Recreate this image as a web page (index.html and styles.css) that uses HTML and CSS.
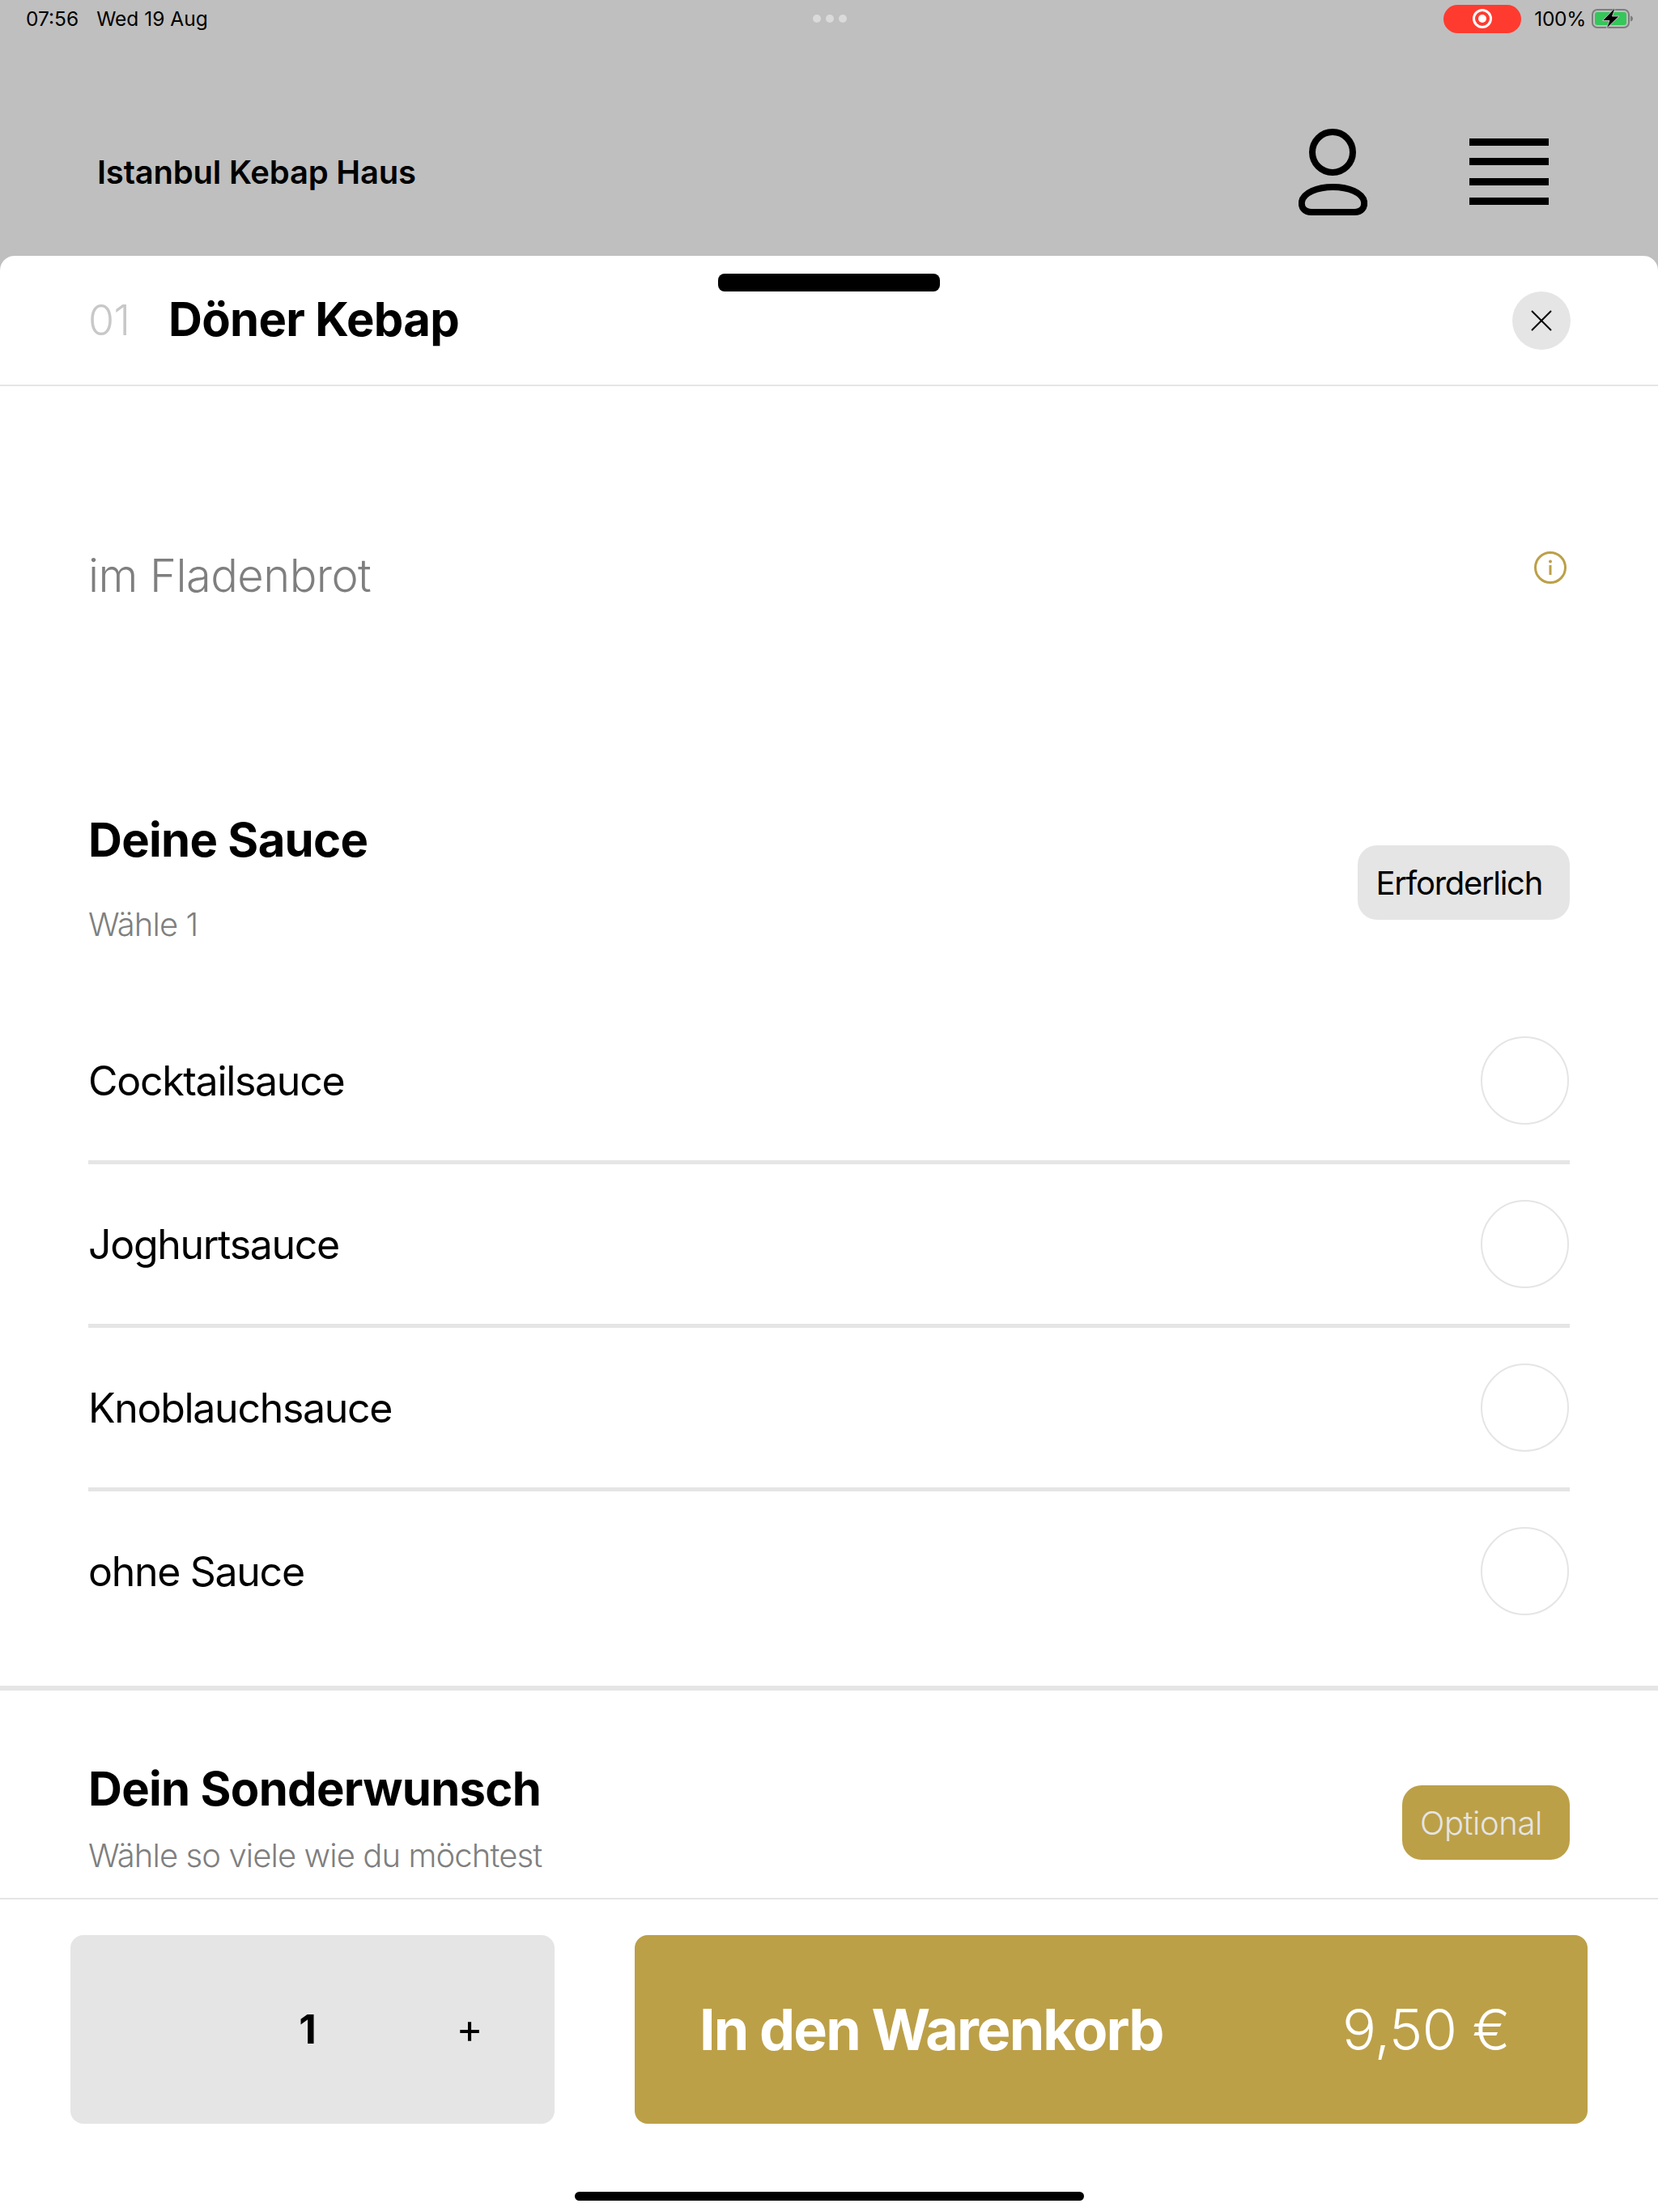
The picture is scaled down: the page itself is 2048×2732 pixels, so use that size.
FILE: index.html
```html
<!DOCTYPE html>
<html lang="de">
<head>
    <meta charset="UTF-8">
    <meta name="viewport" content="width=device-width, initial-scale=1.0">
    <title>Istanbul Kebap Haus</title>
    <link rel="stylesheet" href="styles.css">
</head>
<body>
    <div class="status-bar">
        <div class="status-left"><span>07:56</span><span>Wed 19 Aug</span></div>
        <div class="status-dots"><i></i><i></i><i></i></div>
        <div class="status-right">
            <div class="record-pill">
                <svg width="26" height="26" viewBox="0 0 26 26">
                    <circle cx="13" cy="13" r="10.5" fill="none" stroke="#fff" stroke-width="3"/>
                    <circle cx="13" cy="13" r="5" fill="#fff"/>
                </svg>
            </div>
            <span class="battery-text">100%</span>
            <svg class="battery" width="52" height="26" viewBox="0 0 52 26">
                <rect x="1" y="2" width="45" height="22" rx="6" fill="none" stroke="#7d7d7d" stroke-width="2"/>
                <rect x="4" y="5" width="39" height="16" rx="3" fill="#34c759"/>
                <path d="M48 9.500c2 .4 3 1.800 3 3.500s-1 3.100-3 3.500z" fill="#7d7d7d"/>
                <path d="M28 .5 13.500 15.500H22L18 25.500 34 10H25.500L29 .5z" fill="#000" stroke="#bfbfbf" stroke-width="1"/>
            </svg>
        </div>
    </div>

    <header class="top-bar">
        <div class="brand">Istanbul Kebap Haus</div>
        <div class="top-icons">
            <svg class="user-icon" width="85" height="107" viewBox="0 0 85 107">
                <circle cx="42" cy="29" r="25" fill="none" stroke="#000" stroke-width="8"/>
                <path d="M16 103H69C78 103 82 97 81 90C79 79 62 72 42.500 72C23 72 6 79 4 90C3 97 7 103 16 103Z" fill="none" stroke="#000" stroke-width="8"/>
            </svg>
            <div class="menu-icon"><span></span><span></span><span></span><span></span></div>
        </div>
    </header>

    <div class="sheet">
        <div class="handle"></div>

        <div class="sheet-head">
            <span class="item-no">01</span>
            <h1 class="item-name">Döner Kebap</h1>
            <button class="close-btn">
                <svg width="26" height="26" viewBox="0 0 26 26">
                    <path d="M1 1 25 25M25 1 1 25" stroke="#000" stroke-width="2" fill="none"/>
                </svg>
            </button>
        </div>

        <div class="sheet-body">
            <div class="intro">
                <span class="intro-text">im Fladenbrot</span>
                <svg width="40" height="40" viewBox="0 0 40 40">
                    <circle cx="20" cy="20" r="18.500" fill="none" stroke="#bca048" stroke-width="3"/>
                    <circle cx="20" cy="12.500" r="2" fill="#bca048"/>
                    <rect x="18.500" y="17" width="3" height="12" fill="#bca048"/>
                </svg>
            </div>

            <section class="group group-sauce">
                <div class="group-head">
                    <div>
                        <h2 class="group-title">Deine Sauce</h2>
                        <p class="group-sub">Wähle 1</p>
                    </div>
                    <span class="badge badge-required">Erforderlich</span>
                </div>
                <div class="option"><span>Cocktailsauce</span><span class="radio"></span></div>
                <div class="option"><span>Joghurtsauce</span><span class="radio"></span></div>
                <div class="option"><span>Knoblauchsauce</span><span class="radio"></span></div>
                <div class="option"><span>ohne Sauce</span><span class="radio"></span></div>
            </section>

            <section class="group group-extra">
                <div class="group-head">
                    <div>
                        <h2 class="group-title">Dein Sonderwunsch</h2>
                        <p class="group-sub">Wähle so viele wie du möchtest</p>
                    </div>
                    <span class="badge badge-optional">Optional</span>
                </div>
            </section>
        </div>

        <footer class="sheet-foot">
            <div class="foot-actions">
                <div class="qty">
                    <span class="qty-value">1</span>
                    <span class="qty-plus">+</span>
                </div>
                <button class="cart-btn">
                    <span class="cart-label">In den Warenkorb</span>
                    <span class="cart-price">9,50 €</span>
                </button>
            </div>
            <div class="home-bar"></div>
        </footer>
    </div>
</body>
</html>
```
FILE: styles.css
```css
* {
    box-sizing: border-box;
}

html, body {
    margin: 0;
    padding: 0;
}

body {
    width: 2048px;
    height: 2732px;
    display: flex;
    flex-direction: column;
    overflow: hidden;
    background-color: #bfbfbf;
    font-family: 'Inter', 'Liberation Sans', sans-serif;
    color: #000;
}

/* Statusleiste */
.status-bar {
    height: 46px;
    display: grid;
    grid-template-columns: 1fr auto 1fr;
    align-items: center;
    padding: 0 30px 0 32px;
    font-size: 24.500px;
}

.status-left {
    display: flex;
    gap: 22px;
}

.status-dots {
    display: flex;
    gap: 6px;
}

.status-dots i {
    width: 10px;
    height: 10px;
    border-radius: 50%;
    background-color: #dadada;
}

.status-right {
    display: flex;
    align-items: center;
    justify-content: flex-end;
}

.record-pill {
    width: 96px;
    height: 35px;
    margin-right: 16px;
    display: flex;
    align-items: center;
    justify-content: center;
    background-color: #ff3b30;
    border-radius: 18px;
}

.battery-text {
    letter-spacing: -0.3px;
}

.battery {
    margin-left: 7px;
}

/* Kopfzeile */
.top-bar {
    height: 270px;
    padding: 62px 135px 0 120px;
    display: flex;
    align-items: center;
    justify-content: space-between;
}

.brand {
    font-size: 40px;
    font-weight: 600;
    letter-spacing: -0.2px;
}

.top-icons {
    display: flex;
    align-items: center;
    gap: 126px;
}

.menu-icon {
    width: 98px;
    height: 82px;
    display: flex;
    flex-direction: column;
    justify-content: space-between;
}

.menu-icon span {
    height: 9px;
    background-color: #000;
}

/* Produktblatt */
.sheet {
    position: relative;
    flex: 1;
    min-height: 0;
    display: flex;
    flex-direction: column;
    background-color: #fff;
    border-radius: 18px 18px 0 0;
}

.handle {
    position: absolute;
    top: 22px;
    left: 887px;
    width: 274px;
    height: 22px;
    background-color: #000;
    border-radius: 8px;
}

.sheet-head {
    height: 161px;
    flex-shrink: 0;
    padding: 0 108px 0 109px;
    display: flex;
    align-items: center;
    border-bottom: 2px solid #e5e5e5;
}

.item-no {
    width: 99px;
    font-size: 52px;
    font-weight: 300;
    letter-spacing: -0.5px;
    color: #c8c8c8;
}

.item-name {
    flex: 1;
    margin: -3px 0 0;
    font-size: 58px;
    font-weight: 700;
    letter-spacing: -0.7px;
}

.close-btn {
    width: 72px;
    height: 72px;
    padding: 0;
    display: flex;
    align-items: center;
    justify-content: center;
    background-color: #e5e5e5;
    border: none;
    border-radius: 50%;
}

.sheet-body {
    flex: 1;
    min-height: 0;
    overflow: hidden;
}

.intro {
    padding: 204px 113px 0 109px;
    display: flex;
    align-items: flex-start;
    justify-content: space-between;
}

.intro-text {
    font-size: 56px;
    line-height: 60px;
    font-weight: 300;
    letter-spacing: -0.55px;
    color: #7f7f7f;
}

.group {
    padding: 0 109px;
}

.group-sauce {
    margin-top: 264px;
    padding-bottom: 43px;
    border-bottom: 6px solid #e5e5e5;
}

.group-extra {
    padding-top: 89px;
}

.group-head {
    display: flex;
    align-items: flex-start;
    justify-content: space-between;
}

.group-title {
    margin: 0;
    font-size: 58px;
    line-height: 64px;
    font-weight: 700;
    letter-spacing: -0.7px;
}

.group-sub {
    margin: 49px 0 0;
    font-size: 40px;
    line-height: 48px;
    font-weight: 300;
    letter-spacing: -0.9px;
    color: #7f7f7f;
}

.group-extra .group-sub {
    margin-top: 27px;
}

.badge {
    height: 92px;
    display: flex;
    align-items: center;
    margin-top: 39px;
    padding: 0 34px 0 22px;
    font-size: 40px;
    border-radius: 24px;
}

.badge-required {
    background-color: #e5e5e5;
    letter-spacing: -1.3px;
}

.badge-optional {
    margin-top: 28px;
    background-color: #bca048;
    color: #e5e5e5;
    font-weight: 300;
    letter-spacing: -0.4px;
}

.option {
    height: 202px;
    display: flex;
    align-items: center;
    justify-content: space-between;
    border-bottom: 5px solid #e5e5e5;
    font-size: 50px;
    letter-spacing: -1.3px;
}

.group-head + .option {
    margin-top: 70px;
}

.option:last-child {
    height: 197px;
    border-bottom: none;
}

.radio {
    width: 109px;
    height: 109px;
    margin-right: 1px;
    border: 2px solid #e5e5e5;
    border-radius: 50%;
}

/* Fusszeile */
.sheet-foot {
    flex-shrink: 0;
    border-top: 2px solid #e5e5e5;
}

.foot-actions {
    padding: 44px 87px 0 87px;
    display: flex;
    gap: 99px;
}

.qty {
    width: 598px;
    height: 233px;
    padding-left: 193px;
    display: flex;
    align-items: center;
    background-color: #e5e5e5;
    border-radius: 16px;
}

.qty span {
    width: 200px;
    text-align: center;
}

.qty-value {
    margin-top: -2px;
    font-size: 50px;
    font-weight: 700;
}

.qty-plus {
    margin-top: -3px;
    font-size: 50px;
}

.cart-btn {
    flex: 1;
    height: 233px;
    padding: 0 96px 0 80px;
    display: flex;
    align-items: center;
    justify-content: space-between;
    background-color: #bca048;
    border: none;
    border-radius: 16px;
    color: #fff;
    font-family: inherit;
    font-size: 70px;
}

.cart-label {
    font-weight: 700;
    letter-spacing: -1.9px;
}

.cart-price {
    font-weight: 300;
    letter-spacing: -0.6px;
}

.home-bar {
    width: 629px;
    height: 11px;
    margin: 84px auto 14px;
    background-color: #000;
    border-radius: 6px;
}
```
